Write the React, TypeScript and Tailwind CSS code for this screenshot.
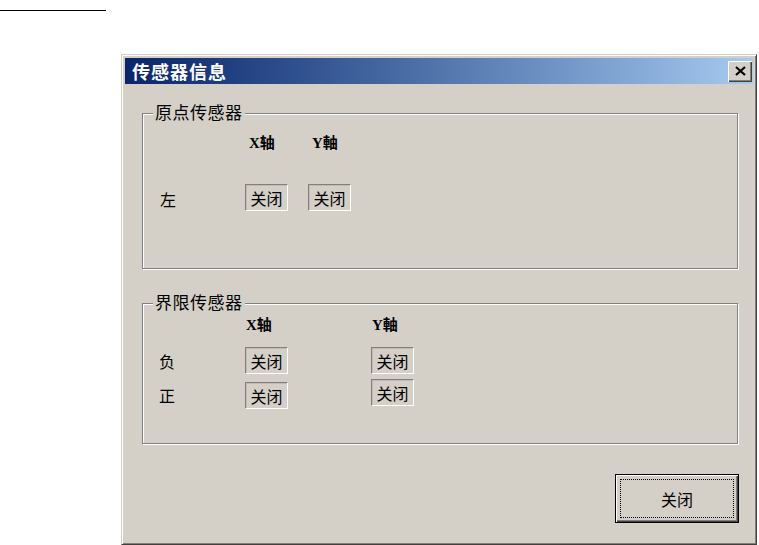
const cjk = { fontFamily: '"Noto Sans CJK SC", "Noto Sans", sans-serif' };
const axis = { fontFamily: '"Liberation Serif", "Noto Sans CJK SC", serif' };

function StatusBox({ className = "" }: { className?: string }) {
  return (
    <div
      className={`flex h-[27px] w-[43px] items-center justify-center border border-t-[#808080] border-l-[#808080] border-b-white border-r-white text-[16px] leading-none text-black shadow-[inset_1px_1px_#c0bcb4] ${className}`}
    >
      关闭
    </div>
  );
}

function GroupBox({ title, height, children }: { title: string; height: string; children: React.ReactNode }) {
  return (
    <div
      className={`relative ml-[17px] w-[596px] border border-[#808080] shadow-[inset_1px_1px_#fff,1px_1px_#fff] ${height}`}
    >
      <span className="absolute left-[10px] top-[-11px] bg-[#d4d0c8] px-[2px] text-[17px] leading-none tracking-[0.5px] text-black">
        {title}
      </span>
      {children}
    </div>
  );
}

export default function App() {
  return (
    <div className="min-h-screen w-[759px] bg-white pt-[10px]" style={cjk}>
      <div className="h-px w-[106px] bg-black" />

      <div className="ml-[121px] mt-[43px] flex h-[491px] w-[636px] flex-col border border-t-[#d4d0c8] border-l-[#d4d0c8] border-b-[#404040] border-r-[#404040] bg-[#d4d0c8] p-[3px] shadow-[inset_1px_1px_#fff,inset_-1px_-1px_#808080]">
        {/* title bar */}
        <div className="flex h-[26px] items-center justify-between bg-gradient-to-r from-[#0a246a] to-[#a6caf0] pl-[7px]">
          <span className="text-[18px] font-bold leading-none tracking-[1px] text-white">传感器信息</span>
          <div className="mr-[1px] flex h-[21px] w-[24px] items-center justify-center bg-[#d4d0c8] shadow-[inset_1px_1px_#fff,inset_-1px_-1px_#404040,inset_-2px_-2px_#808080]">
            <svg width="11" height="10" viewBox="0 0 11 10">
              <path d="M1 1 L10 9 M10 1 L1 9" stroke="#000" strokeWidth="2.2" fill="none" />
            </svg>
          </div>
        </div>

        <div className="mt-[29px]">
          <GroupBox title="原点传感器" height="h-[156px]">
            <div className="flex pl-[106px] pt-[22px] text-[15px] font-bold leading-none text-black" style={axis}>
              <span className="w-[63px]">X轴</span>
              <span>Y軸</span>
            </div>
            <div className="mt-[33px] flex items-start">
              <span className="ml-[17px] mt-[7px] w-[85px] text-[16px] leading-none text-black">左</span>
              <StatusBox />
              <StatusBox className="ml-[20px]" />
            </div>
          </GroupBox>
        </div>

        <div className="mt-[34px]">
          <GroupBox title="界限传感器" height="h-[141px]">
            <div className="flex pl-[103px] pt-[14px] text-[15px] font-bold leading-none text-black" style={axis}>
              <span className="w-[126px]">X轴</span>
              <span>Y軸</span>
            </div>
            <div className="mt-[14px] flex items-start">
              <span className="ml-[16px] mt-[6px] w-[86px] text-[16px] leading-none text-black">负</span>
              <StatusBox />
              <StatusBox className="ml-[83px]" />
            </div>
            <div className="mt-[8px] flex items-start">
              <span className="ml-[16px] mt-[5px] w-[86px] text-[16px] leading-none text-black">正</span>
              <StatusBox />
              <StatusBox className="-mt-[3px] ml-[83px]" />
            </div>
          </GroupBox>
        </div>

        <div className="mt-[30px] ml-[490px] h-[49px] w-[124px] border border-black p-[4px] shadow-[inset_1px_1px_#fff,inset_-1px_-1px_#404040,inset_-2px_-2px_#808080]">
          <div className="flex h-full items-center justify-center border border-dotted border-black text-[16px] leading-none text-black">
            关闭
          </div>
        </div>
      </div>
    </div>
  );
}
